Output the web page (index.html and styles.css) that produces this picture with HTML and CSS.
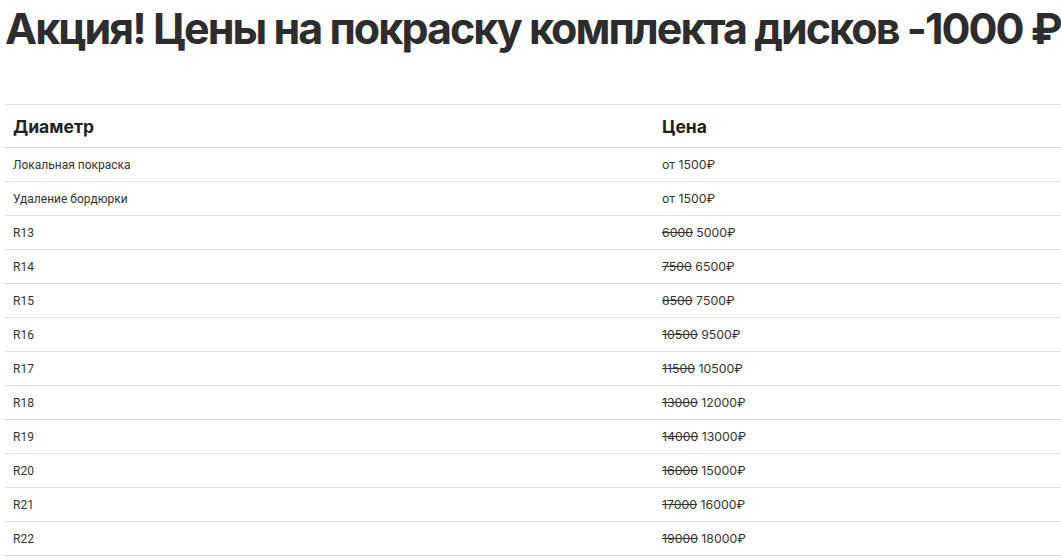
FILE: index.html
```html
<!DOCTYPE html>
<html lang="ru">
<head>
<meta charset="utf-8">
<link rel="stylesheet" href="styles.css">
</head>
<body>
<h1 class="title">Акция! Цены на покраску комплекта дисков -1000 ₽</h1>
<table class="prices">
  <thead>
    <tr><th class="col-name">Диаметр</th><th>Цена</th></tr>
  </thead>
  <tbody>
    <tr><td>Локальная покраска</td><td>от 1500₽</td></tr>
    <tr><td>Удаление бордюрки</td><td>от 1500₽</td></tr>
    <tr><td>R13</td><td><s>6000</s> 5000₽</td></tr>
    <tr><td>R14</td><td><s>7500</s> 6500₽</td></tr>
    <tr><td>R15</td><td><s>8500</s> 7500₽</td></tr>
    <tr><td>R16</td><td><s>10500</s> 9500₽</td></tr>
    <tr><td>R17</td><td><s>11500</s> 10500₽</td></tr>
    <tr><td>R18</td><td><s>13000</s> 12000₽</td></tr>
    <tr><td>R19</td><td><s>14000</s> 13000₽</td></tr>
    <tr><td>R20</td><td><s>16000</s> 15000₽</td></tr>
    <tr><td>R21</td><td><s>17000</s> 16000₽</td></tr>
    <tr><td>R22</td><td><s>19000</s> 18000₽</td></tr>
  </tbody>
</table>
</body>
</html>
```
FILE: styles.css
```css
html, body {
  margin: 0;
  padding: 0;
  background: #fff;
}
body {
  padding: 0 0 0 5px;
  color: #333;
  font-family: Roboto, "Noto Sans", sans-serif;
}
.title {
  margin: 0;
  padding-top: 4px;
  font-family: Inter, Roboto, sans-serif;
  font-weight: 700;
  font-size: 43px;
  line-height: 48px;
  letter-spacing: -1.96px;
  color: #2d2d2d;
  white-space: nowrap;
}
.prices {
  margin-top: 52px;
  width: 1056px;
  border-collapse: collapse;
  border-top: 1px solid #ddd;
}
.prices th {
  text-align: left;
  font-family: Inter, Roboto, sans-serif;
  font-weight: 700;
  font-size: 17.5px;
  color: #222;
  height: 42px;
  padding: 0 8px;
  border-bottom: 1px solid #ddd;
}
.prices .col-name {
  width: 633px;
}
.prices td {
  font-size: 12px;
  height: 33px;
  padding: 0 8px;
  border-bottom: 1px solid #ddd;
}
.prices td + td {
  font-family: Inter, Roboto, sans-serif;
  font-size: 12.3px;
}
```
